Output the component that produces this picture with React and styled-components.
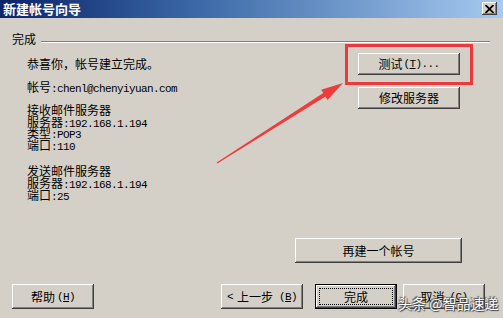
import React from "react";
import styled, { createGlobalStyle, css } from "styled-components";

const Global = createGlobalStyle`
  html, body { margin: 0; padding: 0; background: #d4d0c8; }
  body { width: 503px; height: 318px; overflow: hidden; }
`;

const Window = styled.div`
  position: relative;
  width: 503px;
  height: 318px;
  background: #d4d0c8;
  display: flex;
  flex-direction: column;
  font-family: "Noto Sans CJK SC", sans-serif;
  font-size: 12px;
  color: #000;
  overflow: hidden;
`;

const TitleBar = styled.div`
  flex: none;
  height: 18px;
  display: flex;
  align-items: center;
  padding: 0 6px 0 3px;
  background: linear-gradient(to right, #0a246a 0%, #3d6aa8 40%, #a6caf0 100%);
`;

const Title = styled.div`
  flex: 1;
  color: #fff;
  font-weight: bold;
  font-size: 13px;
  line-height: 18px;
`;

const CloseBtn = styled.div`
  width: 15px;
  height: 13px;
  margin-top: -1px;
  background: #d4d0c8;
  box-shadow: inset -1px -1px #404040, inset 1px 1px #fff, inset -2px -2px #808080;
  display: flex;
  align-items: center;
  justify-content: center;
`;

const Body = styled.div`
  flex: 1;
  display: flex;
  flex-direction: column;
`;

const Header = styled.div`
  display: flex;
  margin-top: 14px;
  padding-left: 12px;
  padding-right: 13px;
  height: 14px;
`;

const HeaderLabel = styled.div`
  line-height: 14px;
  font-size: 12px;
`;

const Rule = styled.div`
  flex: 1;
  margin-left: 5px;
  margin-top: 9px;
  height: 0;
  border-top: 1px solid #808080;
  border-bottom: 1px solid #fff;
`;

const Content = styled.div`
  display: flex;
  padding-left: 27px;
  padding-right: 43px;
`;

const TextCol = styled.div`
  padding-top: 12px;
  display: flex;
  flex-direction: column;
`;

const Line = styled.div`
  line-height: ${(p) => (p.$tight ? "11.6px" : "12px")};
  height: ${(p) => (p.$tight ? "11.6px" : "12px")};
  margin-top: ${(p) => p.$gap || 0}px;
  white-space: nowrap;
`;

const Mono = styled.span`
  font-family: "Liberation Mono", monospace;
  font-size: 11px;
  letter-spacing: -0.6px;
  margin-left: ${(p) => p.$ml || 0}px;
  margin-right: ${(p) => p.$mr || 0}px;
`;

const SideCol = styled.div`
  margin-left: auto;
  padding-top: 7px;
  display: flex;
  flex-direction: column;
  gap: 12px;
`;

const Button = styled.div`
  box-sizing: border-box;
  position: relative;
  width: ${(p) => p.$w}px;
  height: ${(p) => p.$h || 25}px;
  background: #d4d0c8;
  box-shadow: inset -1px -1px #404040, inset 1px 1px #fff, inset -2px -2px #808080;
  display: flex;
  align-items: center;
  justify-content: center;
  font-size: 12px;
  line-height: 14px;
  white-space: nowrap;
  ${(p) =>
    p.$default &&
    css`
      border: 1px solid #000;
      &::after {
        content: "";
        position: absolute;
        inset: 3px;
        border: 1px dotted #000;
      }
    `}
`;

const U = styled.span`
  text-decoration: underline;
`;

const Spacer = styled.div`
  flex: 1;
`;

const AnotherRow = styled.div`
  display: flex;
  justify-content: flex-end;
  padding-right: 41px;
`;

const BottomRow = styled.div`
  display: flex;
  margin-top: 21px;
  margin-bottom: 9px;
  padding: 0 18px 0 12px;
`;

const NavGroup = styled.div`
  margin-left: auto;
  display: flex;
`;

const NavGap = styled.div`
  width: ${(p) => p.$w}px;
`;

const Highlight = styled.div`
  position: absolute;
  left: 345px;
  top: 44px;
  width: 128px;
  height: 41px;
  box-sizing: border-box;
  border: 3px solid #ea3a3e;
  pointer-events: none;
`;

const Overlay = styled.svg`
  position: absolute;
  left: 0;
  top: 0;
  pointer-events: none;
`;

const Watermark = styled.div`
  position: absolute;
  left: 398px;
  top: 294px;
  font-size: 14px;
  line-height: 18px;
  color: #fff;
  text-shadow: 0 0 1px #333, 1px 1px 1px #444, -1px -1px 1px #555;
  white-space: nowrap;
  pointer-events: none;
`;

export default function App() {
  return (
    <Window>
      <Global />
      <TitleBar>
        <Title>新建帐号向导</Title>
        <CloseBtn>
          <svg width="9" height="8" viewBox="0 0 9 8">
            <path d="M0.5 0 L8.5 8 M8.5 0 L0.5 8" stroke="#000" strokeWidth="1.8" fill="none" />
          </svg>
        </CloseBtn>
      </TitleBar>
      <Body>
        <Header>
          <HeaderLabel>完成</HeaderLabel>
          <Rule />
        </Header>
        <Content>
          <TextCol>
            <Line>恭喜你，帐号建立完成。</Line>
            <Line $gap={11}>
              帐号<Mono>:chenl@chenyiyuan.com</Mono>
            </Line>
            <Line $gap={11} $tight>接收邮件服务器</Line>
            <Line $tight>
              服务器<Mono>:192.168.1.194</Mono>
            </Line>
            <Line $tight>
              类型<Mono>:POP3</Mono>
            </Line>
            <Line $tight>
              端口<Mono>:110</Mono>
            </Line>
            <Line $gap={15} $tight>发送邮件服务器</Line>
            <Line $tight>
              服务器<Mono>:192.168.1.194</Mono>
            </Line>
            <Line $tight>
              端口<Mono>:25</Mono>
            </Line>
          </TextCol>
          <SideCol>
            <Button $w={102} $h={22}>
              测试<Mono $ml={1}>(<U>T</U>)...</Mono>
            </Button>
            <Button $w={102} $h={22}>
              修改服务器
            </Button>
          </SideCol>
        </Content>
        <Spacer />
        <AnotherRow>
          <Button $w={167}>再建一个帐号</Button>
        </AnotherRow>
        <BottomRow>
          <Button $w={82}>
            帮助<Mono $ml={2}>(<U>H</U>)</Mono>
          </Button>
          <NavGroup>
            <Button $w={82}>
              <Mono $mr={4}>&lt;</Mono>上一步<Mono $ml={6}>(<U>B</U>)</Mono>
            </Button>
            <NavGap $w={12} />
            <Button $w={82} $default>
              完成
            </Button>
            <NavGap $w={6} />
            <Button $w={82}>
              取消<Mono $ml={5}>(<U>C</U>)</Mono>
            </Button>
          </NavGroup>
        </BottomRow>
      </Body>

      <Highlight />
      <Overlay width="503" height="318" viewBox="0 0 503 318">
        <polygon
          points="217.3,163.4 325.5,96.5 327.6,99.9 343,83 321.2,89.7 323.3,93.1 216.7,162.6"
          fill="#ee3b3b"
        />
      </Overlay>
      <Watermark>头条 @智品速递</Watermark>
    </Window>
  );
}
